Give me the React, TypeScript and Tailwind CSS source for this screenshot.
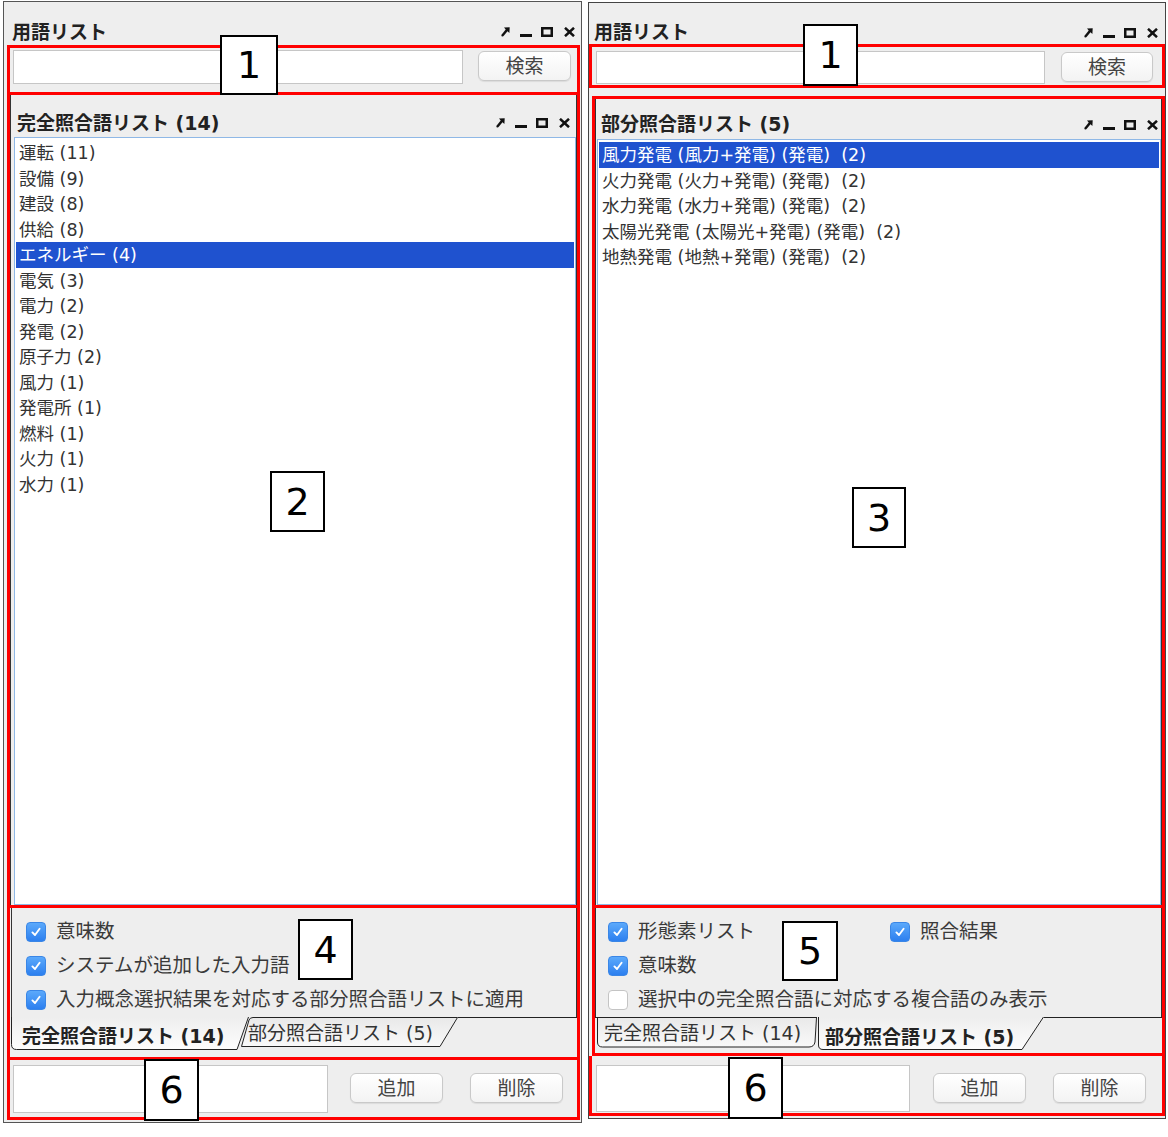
import React from 'react';

const fullItems = [
    '運転 (11)', '設備 (9)', '建設 (8)', '供給 (8)', 'エネルギー (4)', '電気 (3)', '電力 (2)',
    '発電 (2)', '原子力 (2)', '風力 (1)', '発電所 (1)', '燃料 (1)', '火力 (1)', '水力 (1)',
];

const partialItems = [
    '風力発電 (風力+発電) (発電)  (2)',
    '火力発電 (火力+発電) (発電)  (2)',
    '水力発電 (水力+発電) (発電)  (2)',
    '太陽光発電 (太陽光+発電) (発電)  (2)',
    '地熱発電 (地熱+発電) (発電)  (2)',
];

function WinIcons() {
    return (
        <div className="flex items-end h-[11px]">
            <svg width="9" height="10" viewBox="0 0 9 10">
                <path d="M3 0.6 L8.7 0.3 L8.4 6 L6.5 4.3 L3.2 8.2 Q1.8 10 0.7 9.2 Q-0.2 8.2 1.3 6.8 L4.7 2.4 Z" fill="#111" />
            </svg>
            <svg width="12" height="10" viewBox="0 0 12 10" className="ml-[10px]">
                <rect x="0" y="7" width="12" height="3" fill="#111" />
            </svg>
            <svg width="12" height="10" viewBox="0 0 12 10" className="ml-[9px]">
                <rect x="1.25" y="1.25" width="9.5" height="7.5" fill="none" stroke="#111" strokeWidth="2.5" />
            </svg>
            <svg width="11" height="10" viewBox="0 0 11 10" className="ml-[11px]">
                <path d="M1 0.8 L10 9.2 M10 0.8 L1 9.2" stroke="#111" strokeWidth="2.5" />
            </svg>
        </div>
    );
}

function Btn({ label, className = '' }: { label: string, className?: string }) {
    return (
        <button className={`h-[30px] rounded-[6px] border border-[#c9c9c9] bg-linear-to-b from-white to-[#f3f3f3] text-[19px] leading-none text-[#444] shadow-[0_1px_1px_rgba(0,0,0,0.08)] ${className}`}>
            {label}
        </button>
    );
}

function Check({ on }: { on: boolean }) {
    if (!on) return <span className="w-[20px] h-[20px] rounded-[4px] bg-white border border-[#c4c4c4] shrink-0" />;
    return (
        <span className="w-[20px] h-[20px] rounded-[4px] bg-linear-to-b from-[#5ba9fb] to-[#2c7fef] border border-[#3a86e6] flex items-center justify-center shrink-0">
            <svg width="12" height="12" viewBox="0 0 12 12">
                <path d="M2.4 6.4 L5 9 L9.6 2.8" stroke="white" strokeWidth="1.9" fill="none" strokeLinecap="round" strokeLinejoin="round" />
            </svg>
        </span>
    );
}

function CheckRow({ on, label }: { on: boolean, label: string }) {
    return (
        <div className="flex items-center gap-[10px]">
            <Check on={on} />
            <span className="text-[19.5px] leading-[24px] text-[#3a3a3a]">{label}</span>
        </div>
    );
}

function ListBox({ items, selected, className = '' }: { items: string[], selected: number, className?: string }) {
    return (
        <div className={`flex-1 border border-[#8fb8e6] bg-white pt-[2px] ${className}`}>
            {items.map((t, i) => (
                <div
                    key={t}
                    className={`mx-[1px] px-[3px] h-[25.5px] pt-[2px] leading-[23.5px] text-[17.5px] whitespace-pre ${i === selected ? 'bg-[#1f52cf] text-white' : 'text-[#333]'}`}
                >
                    {t}
                </div>
            ))}
        </div>
    );
}

function Badge({ n, className }: { n: string, className: string }) {
    return (
        <div className={`absolute border-2 border-black bg-white flex items-center justify-center text-[38px] leading-none text-black font-['DejaVu_Sans',sans-serif] ${className}`}>
            {n}
        </div>
    );
}

function LeftTabs() {
    return (
        <div className="flex h-[33px] ml-[1px]">
            <div className="relative z-10 w-[238px] h-[33px] pl-[11px] pt-[7px]">
                <svg className="absolute inset-0" width="238" height="33">
                    <defs>
                        <linearGradient id="selL" x1="0" y1="0" x2="0" y2="1">
                            <stop offset="0" stopColor="#eeeeee" />
                            <stop offset="1" stopColor="#fdfdfd" />
                        </linearGradient>
                    </defs>
                    <path d="M0.5,0 V27.5 Q0.5,32.5 5.5,32.5 H226 L237.5,0 Z" fill="url(#selL)" />
                    <path d="M0.5,0 V27.5 Q0.5,32.5 5.5,32.5 H226 L237.5,0" fill="none" stroke="#222" />
                </svg>
                <span className="relative text-[19px] font-bold leading-[24px] text-[#222]">完全照合語リスト (14)</span>
            </div>
            <div className="relative ml-[-8px] w-[217px] h-[31px] pl-[7px] pt-[4px]">
                <svg className="absolute inset-0" width="217" height="31">
                    <defs>
                        <linearGradient id="unL" x1="0" y1="0" x2="0" y2="1">
                            <stop offset="0" stopColor="#e9e9e9" />
                            <stop offset="1" stopColor="#f9f9f9" />
                        </linearGradient>
                    </defs>
                    <path d="M0.5,29.5 L8,3 Q9,0.5 12,0.5 H216 L199,29.5 Z" fill="url(#unL)" />
                    <path d="M0.5,29.5 L8,3 Q9,0.5 12,0.5 H216.5 L199,29.5 H0.5" fill="none" stroke="#222" />
                </svg>
                <span className="relative text-[19px] leading-[24px] text-[#333]">部分照合語リスト (5)</span>
            </div>
            <div className="flex-1 border-t border-[#222]" />
        </div>
    );
}

function RightTabs() {
    return (
        <div className="flex h-[33px]">
            <div className="relative w-[222px] h-[31px] pl-[9px] pt-[4px]">
                <svg className="absolute inset-0" width="222" height="31">
                    <defs>
                        <linearGradient id="unR" x1="0" y1="0" x2="0" y2="1">
                            <stop offset="0" stopColor="#e9e9e9" />
                            <stop offset="1" stopColor="#f9f9f9" />
                        </linearGradient>
                    </defs>
                    <path d="M2.5,0.5 V25 Q2.5,30 7.5,30 H214 Q219,30 220,25 L221.5,0.5 Z" fill="url(#unR)" />
                    <path d="M0,0.5 H222 M2.5,0.5 V25 Q2.5,30 7.5,30 H214 Q219,30 220,25 L221.5,0.5" fill="none" stroke="#222" />
                </svg>
                <span className="relative text-[19px] leading-[24px] text-[#333]">完全照合語リスト (14)</span>
            </div>
            <div className="relative w-[227px] h-[33px] pl-[8px] pt-[8px]">
                <svg className="absolute inset-0" width="227" height="33">
                    <defs>
                        <linearGradient id="selR" x1="0" y1="0" x2="0" y2="1">
                            <stop offset="0" stopColor="#eeeeee" />
                            <stop offset="1" stopColor="#fdfdfd" />
                        </linearGradient>
                    </defs>
                    <path d="M1.5,0 V28 Q1.5,32.5 6,32.5 H205 L226.5,0 Z" fill="url(#selR)" />
                    <path d="M1.5,0 V28 Q1.5,32.5 6,32.5 H205 L226.5,0" fill="none" stroke="#222" />
                </svg>
                <span className="relative text-[19px] font-bold leading-[24px] text-[#222]">部分照合語リスト (5)</span>
            </div>
            <div className="flex-1 border-t border-[#222]" />
        </div>
    );
}

export default function App() {
    return (
        <div className="relative w-[1168px] h-[1137px] bg-white flex items-start gap-[6px] pl-[3px] pt-[1px] font-['DejaVu_Sans','Noto_Sans_CJK_JP',sans-serif]">

            {/* left panel */}
            <div className="w-[579px] h-[1122px] border border-[#555] bg-[#eeeeee] flex flex-col">
                <div className="h-[43px] shrink-0 pt-[16px] pl-[8px] pr-[6px] flex items-center justify-between">
                    <span className="text-[19px] font-bold leading-[24px] text-[#222]">用語リスト</span>
                    <WinIcons />
                </div>

                <div className="ml-[3px] mr-[1px] h-[50px] shrink-0 border-[3px] border-[#ff0000] flex items-start pt-[2px] pl-[3px] pr-[6px]">
                    <div className="w-[450px] h-[34px] bg-white border border-[#c6c6c6]" />
                    <Btn label="検索" className="ml-[15px] mt-[1px] w-[93px] h-[29px]" />
                </div>

                <div className="ml-[3px] mr-[1px] h-[813px] shrink-0 border-[3px] border-t-0 border-[#ff0000] flex flex-col">
                    <div className="flex-1 border-x border-[#333] flex flex-col">
                        <div className="h-[42px] shrink-0 pt-[13px] pl-[6px] pr-[6px] flex items-center justify-between">
                            <span className="text-[19px] font-bold leading-[24px] text-[#222]">完全照合語リスト (14)</span>
                            <WinIcons />
                        </div>
                        <ListBox items={fullItems} selected={4} className="ml-[3px]" />
                    </div>
                </div>

                <div className="ml-[3px] mr-[1px] h-[152px] shrink-0 border-[3px] border-t-0 border-[#ff0000] flex flex-col">
                    <div className="ml-[1px] h-[109px] border-x border-[#333] pt-[7px] pl-[14px] flex flex-col">
                        <div className="h-[34px] flex items-center"><CheckRow on label="意味数" /></div>
                        <div className="h-[34px] flex items-center"><CheckRow on label="システムが追加した入力語" /></div>
                        <div className="h-[34px] flex items-center"><CheckRow on label="入力概念選択結果を対応する部分照合語リストに適用" /></div>
                    </div>
                    <LeftTabs />
                </div>

                <div className="ml-[3px] mr-[1px] h-[60px] shrink-0 border-[3px] border-t-0 border-[#ff0000] flex items-start pt-[5px] pl-[3px]">
                    <div className="w-[315px] h-[48px] bg-white border border-[#c6c6c6]" />
                    <Btn label="追加" className="ml-[22px] mt-[8px] w-[93px]" />
                    <Btn label="削除" className="ml-[27px] mt-[8px] w-[93px]" />
                </div>
            </div>

            {/* right panel */}
            <div className="mt-[1px] w-[578px] h-[1117px] border border-[#444] bg-[#eeeeee] flex flex-col">
                <div className="h-[41px] shrink-0 pt-[17px] pl-[5px] pr-[7px] flex items-center justify-between">
                    <span className="text-[19px] font-bold leading-[24px] text-[#222]">用語リスト</span>
                    <WinIcons />
                </div>

                <div className="h-[44px] shrink-0 border-[3px] border-[#ff0000] flex items-start pt-[4px] pl-[4px] pr-[9px]">
                    <div className="w-[449px] h-[33px] bg-white border border-[#c6c6c6]" />
                    <Btn label="検索" className="ml-[16px] mt-[1px] w-[92px]" />
                </div>

                <div className="mt-[8px] ml-[3px] h-[812px] shrink-0 border-[3px] border-[#ff0000] flex flex-col">
                    <div className="flex-1 border-x border-[#333] flex flex-col">
                        <div className="h-[40px] shrink-0 pt-[10px] pl-[5px] pr-[3px] flex items-center justify-between">
                            <span className="text-[19px] font-bold leading-[24px] text-[#222]">部分照合語リスト (5)</span>
                            <WinIcons />
                        </div>
                        <ListBox items={partialItems} selected={0} className="ml-[1px]" />
                    </div>
                </div>

                <div className="ml-[3px] h-[148px] shrink-0 border-[3px] border-t-0 border-[#ff0000] flex flex-col">
                    <div className="h-[109px] border-x border-[#333] pt-[7px] pl-[12px] flex flex-col">
                        <div className="h-[34px] flex items-center">
                            <div className="w-[282px]"><CheckRow on label="形態素リスト" /></div>
                            <CheckRow on label="照合結果" />
                        </div>
                        <div className="h-[34px] flex items-center"><CheckRow on label="意味数" /></div>
                        <div className="h-[34px] flex items-center"><CheckRow on={false} label="選択中の完全照合語に対応する複合語のみ表示" /></div>
                    </div>
                    <RightTabs />
                </div>

                <div className="h-[60px] shrink-0 border-[3px] border-t-0 border-[#ff0000] flex items-start pt-[9px] pl-[4px]">
                    <div className="w-[314px] h-[47px] bg-white border border-[#c6c6c6]" />
                    <Btn label="追加" className="ml-[23px] mt-[8px] w-[93px]" />
                    <Btn label="削除" className="ml-[27px] mt-[8px] w-[93px]" />
                </div>
            </div>

            {/* annotation labels */}
            <Badge n="1" className="left-[220px] top-[35px] w-[58px] h-[60px]" />
            <Badge n="1" className="left-[803px] top-[24px] w-[55px] h-[62px]" />
            <Badge n="2" className="left-[270px] top-[471px] w-[55px] h-[61px]" />
            <Badge n="3" className="left-[852px] top-[487px] w-[54px] h-[61px]" />
            <Badge n="4" className="left-[298px] top-[919px] w-[55px] h-[61px]" />
            <Badge n="5" className="left-[782px] top-[921px] w-[56px] h-[60px]" />
            <Badge n="6" className="left-[144px] top-[1059px] w-[55px] h-[62px]" />
            <Badge n="6" className="left-[728px] top-[1057px] w-[55px] h-[62px]" />
        </div>
    );
}
